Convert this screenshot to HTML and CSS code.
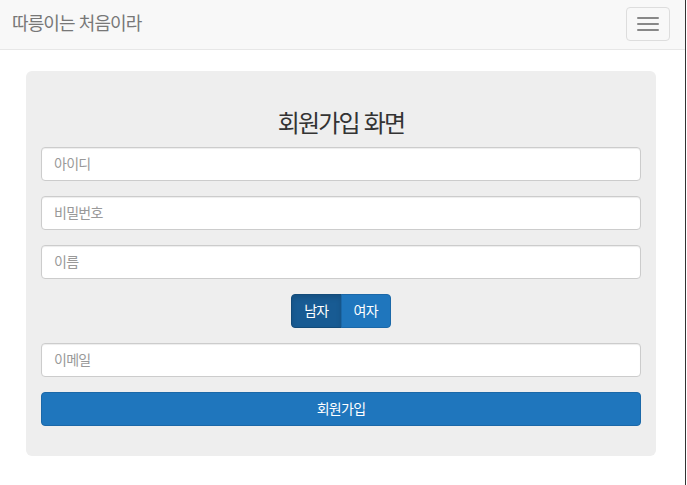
FILE: index.html
```html
<!DOCTYPE html>
<html lang="ko">
<head>
<meta charset="utf-8">
<title>따릉이는 처음이라</title>
<link rel="stylesheet" href="styles.css">
</head>
<body>
<div class="page">
  <nav class="navbar">
    <a class="brand" href="#">따릉이는 처음이라</a>
    <button class="toggle" type="button" aria-label="menu">
      <span class="bar"></span><span class="bar"></span><span class="bar"></span>
    </button>
  </nav>
  <main class="jumbotron">
    <h3 class="title">회원가입 화면</h3>
    <form class="form">
      <div class="group"><input class="control" type="text" placeholder="아이디"></div>
      <div class="group"><input class="control" type="password" placeholder="비밀번호"></div>
      <div class="group"><input class="control" type="text" placeholder="이름"></div>
      <div class="group center">
        <div class="btn-group">
          <button type="button" class="btn btn-primary active">남자</button>
          <button type="button" class="btn btn-primary">여자</button>
        </div>
      </div>
      <div class="group"><input class="control" type="email" placeholder="이메일"></div>
      <button type="submit" class="btn btn-primary btn-block">회원가입</button>
    </form>
  </main>
</div>
</body>
</html>
```

FILE: styles.css
```css
* { box-sizing: border-box; }
html, body { margin: 0; padding: 0; background: #fff; }
body {
  font-family: "Liberation Sans", "Noto Sans CJK KR", sans-serif;
  font-size: 14px;
  line-height: 1.42857;
  color: #333;
}
.page {
  width: 686px;
  min-height: 485px;
  border-right: 1px solid #333;
}
.navbar {
  height: 50px;
  background: #f8f8f8;
  border-bottom: 1px solid #e7e7e7;
  display: flex;
  justify-content: space-between;
  align-items: flex-start;
  padding: 0 15px 0 12px;
}
.brand {
  font-size: 18px;
  line-height: 20px;
  padding: 14px 0 15px;
  color: #777;
  text-decoration: none;
  letter-spacing: -0.05em;
}
.toggle {
  margin-top: 7px;
  width: 44px;
  height: 34px;
  padding: 9px 10px;
  background: transparent;
  border: 1px solid #ddd;
  border-radius: 4px;
  display: flex;
  flex-direction: column;
  gap: 4px;
}
.bar {
  display: block;
  width: 22px;
  height: 2px;
  background: #888;
  border-radius: 1px;
}
.jumbotron {
  width: 630px;
  margin: 21px 0 0 26px;
  padding: 30px 15px;
  background: #eee;
  border-radius: 6px;
}
.title {
  margin: 10px 0 10px;
  font-size: 24px;
  line-height: 26px;
  font-weight: 400;
  text-align: center;
  letter-spacing: -0.075em;
}
.group { margin-bottom: 15px; }
.center { display: flex; justify-content: center; }
.control {
  display: block;
  width: 100%;
  height: 34px;
  padding: 6px 12px;
  font: inherit;
  font-size: 14px;
  color: #555;
  background: #fff;
  border: 1px solid #ccc;
  border-radius: 4px;
  box-shadow: inset 0 1px 1px rgba(0,0,0,.075);
  letter-spacing: -0.05em;
}
.control::placeholder { color: #999; }
.btn-group { display: flex; }
.btn {
  height: 34px;
  padding: 6px 12px;
  font: inherit;
  font-size: 14px;
  line-height: 20px;
  border: 1px solid transparent;
  border-radius: 4px;
  letter-spacing: -0.05em;
  cursor: pointer;
}
.btn-primary {
  color: #fff;
  background: #1f76bd;
  border-color: #1b68a8;
}
.btn-primary.active {
  background: #185b93;
  border-color: #134b79;
  box-shadow: inset 0 3px 5px rgba(0,0,0,.125);
}
.btn-group .btn:first-child { border-top-right-radius: 0; border-bottom-right-radius: 0; }
.btn-group .btn:last-child { border-top-left-radius: 0; border-bottom-left-radius: 0; margin-left: -1px; }
.btn-block { display: block; width: 100%; }
```
